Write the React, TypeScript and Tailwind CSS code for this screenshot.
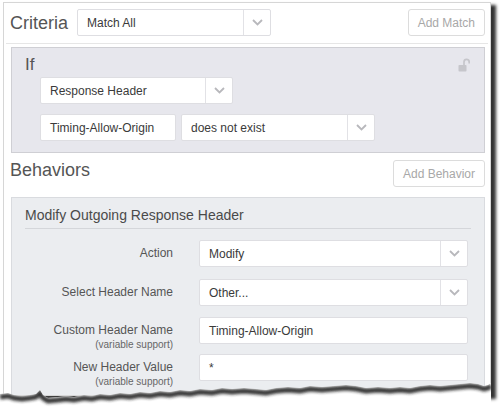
import React from 'react';

const font = { fontFamily: '"Liberation Sans", Arial, Helvetica, sans-serif' };

function Chevron() {
  return (
    <svg width="11" height="7" viewBox="0 0 11 7">
      <path d="M1 1 L5.5 5.5 L10 1" fill="none" stroke="#b8b8bc" strokeWidth="1.8" />
    </svg>
  );
}

function LockIcon() {
  return (
    <svg width="12" height="14" viewBox="0 0 12 14">
      <path d="M6 7 V4 a2.6 2.6 0 0 1 5.2 0 V5.5" fill="none" stroke="#c6c6cb" strokeWidth="1.7" />
      <rect x="0.5" y="7" width="8" height="6.5" rx="0.8" fill="#c6c6cb" />
    </svg>
  );
}

function Select({ value, className = '' }: { value: string; className?: string }) {
  return (
    <div className={`flex h-[27px] bg-white border border-[#dedee2] rounded-[2px] ${className}`}>
      <div className="flex flex-1 items-center pl-[9px] text-[12px] text-[#3a3a3a]">{value}</div>
      <div className="flex w-[27px] items-center justify-center border-l border-[#e2e2e6]">
        <Chevron />
      </div>
    </div>
  );
}

function Input({ value, className = '' }: { value: string; className?: string }) {
  return (
    <div className={`flex h-[27px] items-center bg-white border border-[#dedee2] rounded-[2px] pl-[9px] text-[12px] text-[#3a3a3a] ${className}`}>
      {value}
    </div>
  );
}

function Button({ label }: { label: string }) {
  return (
    <div className="flex h-[27px] items-center rounded-[3px] border border-[#dcdcdc] bg-white px-[9px] text-[12px] text-[#a8a8a8]">
      {label}
    </div>
  );
}

function Row({ label, sub, children }: { label: string; sub?: boolean; children: React.ReactNode }) {
  return (
    <div className="flex">
      <div className="w-[148px] shrink-0 text-right text-[#555]">
        <div className="pt-[6px] text-[12px] leading-[14px]">{label}</div>
        {sub && <div className="mt-[2px] text-[10px] leading-[12px] text-[#666]">(variable support)</div>}
      </div>
      <div className="ml-[26px] w-[269px]">{children}</div>
    </div>
  );
}

const edge: [number, number][] = [
  [0, 394], [8, 393], [14, 395], [22, 396], [30, 395], [36, 394], [40, 390], [43, 395], [48, 398],
  [58, 397], [66, 396], [74, 397], [84, 395], [92, 396], [100, 394], [110, 395], [120, 393],
  [130, 394], [140, 392], [150, 393], [160, 391], [170, 392], [180, 390], [190, 391], [200, 389],
  [212, 390], [222, 388], [232, 389], [244, 388], [256, 389], [266, 390], [276, 388], [288, 387],
  [300, 388], [310, 386], [322, 387], [334, 386], [346, 385], [356, 386], [366, 388], [378, 387],
  [390, 388], [400, 387], [410, 388], [420, 386], [430, 385], [440, 386], [450, 385], [460, 384],
  [470, 383], [478, 384], [484, 386], [488, 385], [491, 383],
];

function TornEdge() {
  const top = 370;
  const line = edge.map(([x, y], i) => `${i ? 'L' : 'M'}${x} ${y - top}`).join(' ');
  const shadow = edge.map(([x, y], i) => `${i ? 'L' : 'M'}${x} ${y - top + 3}`).join(' ');
  const region = `${line} L491 41 L0 41 Z`;
  return (
    <svg className="absolute left-0 top-[370px]" width="502" height="41" viewBox="0 0 502 41">
      <defs>
        <clipPath id="below">
          <path d={region} />
        </clipPath>
        <filter id="blur" x="-5%" y="-50%" width="110%" height="200%">
          <feGaussianBlur stdDeviation="1.6" />
        </filter>
      </defs>
      <path d={region} fill="#ffffff" />
      <g clipPath="url(#below)">
        <path d={shadow} fill="none" stroke="#1e1e1e" strokeWidth="5" filter="url(#blur)" opacity="0.9" />
      </g>
    </svg>
  );
}

export default function App() {
  return (
    <div className="relative h-[411px] w-[502px] overflow-hidden bg-white" style={font}>
      <div className="ml-[3px] mt-[2px] h-[394px] w-[488px] overflow-hidden border border-[#d6d6d6] bg-white shadow-[5px_3px_3px_rgba(0,0,0,0.8)]">
        {/* Criteria header */}
        <div className="flex items-center pl-[6px] pr-[5px] pt-[6px]">
          <div className="text-[18px] leading-[22px] text-[#555]">Criteria</div>
          <Select value="Match All" className="ml-[9px] w-[194px]" />
          <div className="flex-1" />
          <Button label="Add Match" />
        </div>
        <div className="mx-[2px] mt-[7px] h-px bg-[#e6e6e6]" />

        {/* If panel */}
        <div className="ml-[7px] mr-[5px] mt-[3px] h-[106px] border border-[#cfcfd4] bg-[#e7e7ed] pl-[13px] pr-[10px] pt-[7px]">
          <div className="flex items-start justify-between">
            <div className="text-[17px] leading-[19px] text-[#555]">If</div>
            <div className="mt-[3px] mr-[4px]"><LockIcon /></div>
          </div>
          <div className="ml-[15px] mt-[3px]">
            <Select value="Response Header" className="w-[193px]" />
            <div className="mt-[10px] flex">
              <Input value="Timing-Allow-Origin" className="w-[136px]" />
              <Select value="does not exist" className="ml-[5px] w-[194px]" />
            </div>
          </div>
        </div>

        {/* Behaviors header */}
        <div className="flex items-start pl-[6px] pr-[5px] pt-[6px]">
          <div className="text-[18px] leading-[22px] text-[#555]">Behaviors</div>
          <div className="flex-1" />
          <div className="mt-[1px]"><Button label="Add Behavior" /></div>
        </div>

        {/* Behavior panel */}
        <div className="ml-[7px] mr-[5px] mt-[10px] h-[220px] border border-[#d9dbdf] bg-[#ebedf0] pl-[13px] pr-[15px] pt-[8px]">
          <div className="text-[14px] leading-[18px] text-[#4a4a4a]">Modify Outgoing Response Header</div>
          <div className="mt-[4px] mr-[-2px] h-px bg-[#d4d6da]" />
          <div className="mt-[11px] flex flex-col gap-[12px]">
            <Row label="Action"><Select value="Modify" /></Row>
            <Row label="Select Header Name"><Select value="Other..." /></Row>
            <div className="-mt-[1px]">
              <Row label="Custom Header Name" sub><Input value="Timing-Allow-Origin" /></Row>
            </div>
            <div className="-mt-[9px]">
              <Row label="New Header Value" sub><Input value="*" /></Row>
            </div>
          </div>
        </div>
      </div>
      <TornEdge />
    </div>
  );
}
